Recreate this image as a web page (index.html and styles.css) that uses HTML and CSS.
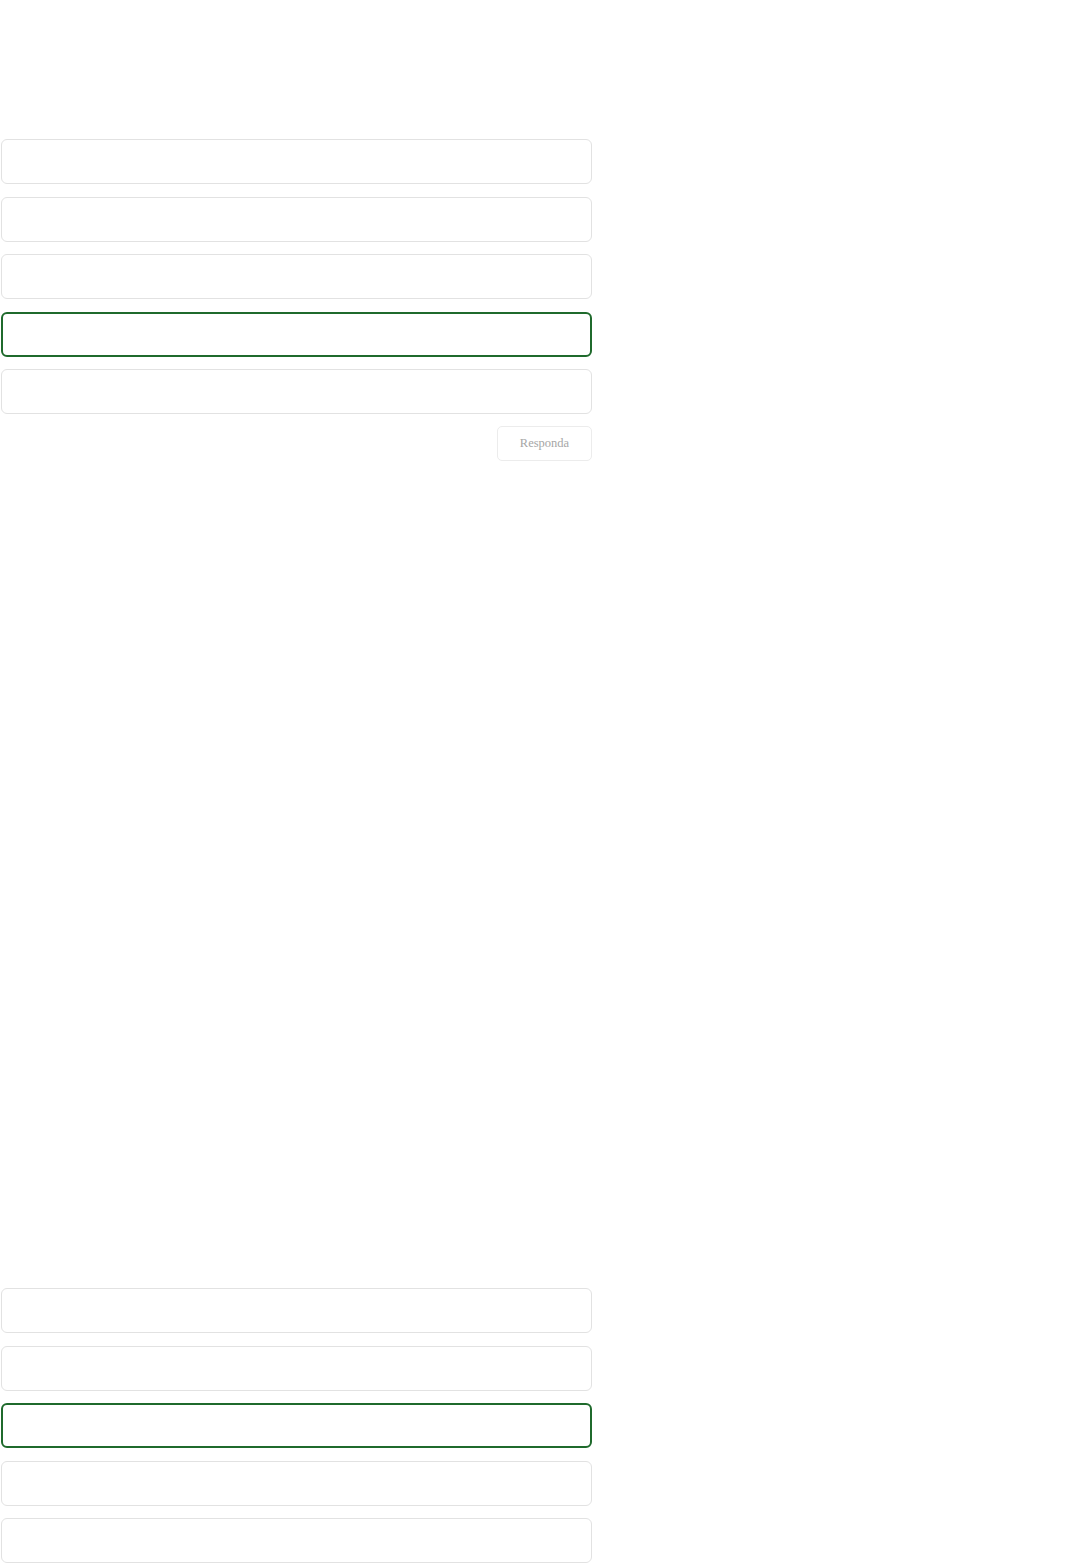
FILE: index.html
```html
<!DOCTYPE html>
<html lang="pt">
<head>
    <meta charset="UTF-8">
    <meta name="viewport" content="width=device-width, initial-scale=1.0">
    <title>Quiz</title>
    <link rel="stylesheet" href="styles.css">
</head>
<body>
    <div class="quiz">
        <div class="question">
            <ul class="options">
                <li class="option"></li>
                <li class="option"></li>
                <li class="option"></li>
                <li class="option selected"></li>
                <li class="option"></li>
            </ul>
            <div class="actions">
                <button class="answer" disabled>Responda</button>
            </div>
        </div>

        <div class="question next">
            <ul class="options">
                <li class="option"></li>
                <li class="option"></li>
                <li class="option selected"></li>
                <li class="option"></li>
                <li class="option"></li>
            </ul>
        </div>
    </div>
</body>
</html>
```

FILE: styles.css
```css
body {
    margin: 0;
    background: #fff;
    font-family: "Liberation Serif", serif;
    color: #333;
}
.quiz {
    width: 591px;
    margin-left: 1px;
    padding-top: 139px;
}
.options {
    list-style: none;
    margin: 0;
    padding: 0;
    display: flex;
    flex-direction: column;
    gap: 12.5px;
}
.option {
    box-sizing: border-box;
    height: 45px;
    border: 1px solid #e2e2e2;
    border-radius: 6px;
    background: #fff;
}
.option.selected {
    border: 2px solid #1f6a2c;
}
.actions {
    display: flex;
    justify-content: flex-end;
    margin-top: 12px;
}
.answer {
    box-sizing: border-box;
    width: 95px;
    height: 35px;
    border: 1px solid #ececec;
    border-radius: 5px;
    background: #fff;
    color: #a6a6a6;
    font-family: "Liberation Serif", serif;
    font-size: 12.5px;
}
.next {
    margin-top: 827px;
}
```
